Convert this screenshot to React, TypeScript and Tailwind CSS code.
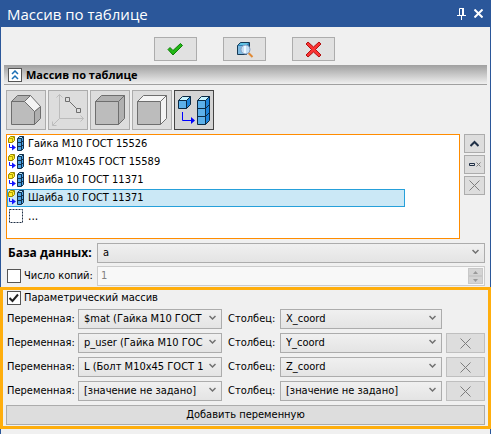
import React, { useState } from "react";

const lines = ["$mat (Гайка M10 ГОСТ", "p_user (Гайка M10 ГОС", "L (Болт M10x45 ГОСТ 1", "[значение не задано]"];
const columns = ["X_coord", "Y_coord", "Z_coord", "[значение не задано]"];

const operations = [
  "Гайка M10 ГОСТ 15526",
  "Болт M10x45 ГОСТ 15589",
  "Шайба 10 ГОСТ 11371",
  "Шайба 10 ГОСТ 11371",
];

function CheckIcon() {
  return (
    <svg width="17" height="13" viewBox="0 0 17 13">
      <path d="M1 6.5 L3 4.5 L6 7.5 L13.5 0.5 L15.5 2.5 L6 12 Z" fill="#22b814" stroke="#0d7d08" />
    </svg>
  );
}

function PreviewIcon() {
  return (
    <svg width="18" height="17" viewBox="0 0 18 17">
      <path d="M1.5 4.5 L4.5 1.5 H13.5 V10.5 L10.5 13.5 H1.5 Z" fill="#2f7fb5" stroke="#173a55" />
      <path d="M2 5 H10 V13 H2 Z" fill="#7db9e0" />
      <path d="M2.5 4 L5 2 H12.5 L10.5 4 Z" fill="#5fc4e6" />
      <path d="M12.5 12 L16.5 16" stroke="#e08a35" strokeWidth="2" />
      <circle cx="9.5" cy="8.5" r="4.5" fill="#c3dff5" stroke="#8c9fc0" />
      <path d="M9 5 V12" stroke="#eef8ff" strokeWidth="2" />
    </svg>
  );
}

function CancelIcon() {
  return (
    <svg width="17" height="17" viewBox="0 0 17 17">
      <path
        d="M1 3 L3 1 L8.5 6 L14 1 L16 3 L10.5 8.5 L16 14 L14 16 L8.5 11 L3 16 L1 14 L6.5 8.5 Z"
        fill="#fb3434"
        stroke="#b01010"
      />
    </svg>
  );
}

function ChamferIcon() {
  return (
    <svg width="38" height="38" viewBox="1 1 38 38" stroke="#6e6e6e" strokeLinejoin="round">
      <path d="M5.5 11.5 H18.5 L28.5 21.5 V34.5 H5.5 Z" fill="#bcbcbc" />
      <path d="M5.5 11.5 L11.5 5.5 H24.5 L18.5 11.5 Z" fill="#b0b0b0" />
      <path d="M28.5 21.5 L34.5 16.5 V28.5 L28.5 34.5 Z" fill="#b0b0b0" />
      <path d="M24.5 5.5 L34.5 16.5 L28.5 21.5 L18.5 11.5 Z" fill="#f4f4f4" />
    </svg>
  );
}

function AxesIcon() {
  return (
    <svg width="38" height="38" viewBox="1 1 38 38" fill="none" stroke="#bcbcbc">
      <path d="M11.5 4.5 V28.5 H35.5 M11.5 28.5 L4.5 35.5 M8.5 7.5 L11.5 4.5 L14.5 7.5 M32.5 25.5 L35.5 28.5 L32.5 31.5 M4.5 31.5 V35.5 H8.5" />
      <path d="M21.5 11.5 L28.5 18.5 M17.5 7.5 H21.5 V11.5 H17.5 Z M28.5 18.5 H32.5 V22.5 H28.5 Z" stroke="#6e6e6e" />
    </svg>
  );
}

function CubeIcon({ side, top }: { side: string; top: string }) {
  return (
    <svg width="38" height="38" viewBox="1 1 38 38" stroke="#6e6e6e" strokeLinejoin="round">
      <path d="M5.5 11.5 H28.5 V34.5 H5.5 Z" fill="#bcbcbc" />
      <path d="M5.5 11.5 L11.5 5.5 H34.5 L28.5 11.5 Z" fill={top} />
      <path d="M28.5 11.5 L34.5 5.5 V28.5 L28.5 34.5 Z" fill={side} />
    </svg>
  );
}

function ArrayIcon() {
  return (
    <svg width="38" height="38" viewBox="1 1 38 38" stroke="#0b2a45" strokeLinejoin="round">
      <path d="M4.5 10.5 H12.5 V18.5 H4.5 Z" fill="#5cb0ea" />
      <path d="M4.5 10.5 L8.5 6.5 H16.5 L12.5 10.5 Z" fill="#c5f3ff" />
      <path d="M12.5 10.5 L16.5 6.5 V14.5 L12.5 18.5 Z" fill="#1c84dc" />
      <path d="M23.5 10.5 H31.5 V34.5 H23.5 Z M23.5 18.5 H31.5 M23.5 26.5 H31.5" fill="#5cb0ea" />
      <path d="M23.5 10.5 L27.5 6.5 H35.5 L31.5 10.5 Z" fill="#c5f3ff" />
      <path d="M31.5 10.5 L35.5 6.5 V30.5 L31.5 34.5 Z M31.5 18.5 L35.5 14.5 M31.5 26.5 L35.5 22.5" fill="#1c84dc" />
      <path d="M8.5 22 V30.5 H18" fill="none" stroke="#0000ff" />
      <path d="M17 27 L21 30.5 L17 34 Z" fill="#0000ff" stroke="none" />
    </svg>
  );
}

function SmallArrayIcon() {
  return (
    <svg className="shrink-0" width="17" height="16" viewBox="0 0 17 16" strokeLinejoin="round">
      <path d="M0.5 2.5 L2.5 0.5 H6.5 V4.5 L4.5 6.5 H0.5 Z" fill="#ffee2e" stroke="#9a8900" />
      <path d="M1 2.5 H4.5 V6 M4.5 2.5 L6 1" fill="none" stroke="#b5a300" />
      <path d="M1.5 8 V11.5 H5" fill="none" stroke="#1414ff" />
      <path d="M4 8.5 L8 11.5 L4 14.5 Z" fill="#1414ff" />
      <path d="M9.5 2.5 L11.5 0.5 H15.5 V12.5 L13.5 14.5 H9.5 Z" fill="#4ba3e6" stroke="#12314d" />
      <path d="M10 2.5 H13.5 V14 M13.5 2.5 L15.5 0.5 M10 6.5 H13.5 L15.5 4.5 M10 10.5 H13.5 L15.5 8.5" fill="none" stroke="#12314d" />
      <path d="M11.5 1.5 H14" stroke="#b8e8ff" />
    </svg>
  );
}

function CrossIcon() {
  return (
    <svg width="11" height="11" viewBox="0 0 11 11" stroke="#7d7d7d">
      <path d="M0.5 0.5 L10.5 10.5 M10.5 0.5 L0.5 10.5" />
    </svg>
  );
}

function Combo({ label, options, value }: { label: string; options: string[]; value: string }) {
  return (
    <div className="relative min-w-0">
      <select
        aria-label={label}
        defaultValue={value}
        className="block h-5 w-full appearance-none border border-[#acacac] bg-linear-to-b from-[#f0f0f0] to-[#e4e4e4] pl-[5px] pr-4 text-black"
      >
        {options.map((o) => (
          <option key={o}>{o}</option>
        ))}
      </select>
      <svg className="pointer-events-none absolute right-1.5 top-1.5" width="7" height="6" viewBox="0 0 7 6">
        <path d="M0.5 1 L3.5 4 L6.5 1" fill="none" stroke="#707070" strokeWidth="1.5" />
      </svg>
    </div>
  );
}

const sideButton = "flex h-[19px] w-[21px] items-center justify-center border border-[#acacac] bg-[#dddddd]";
const dialogButton = "flex h-6 w-[43px] items-center justify-center border border-[#acacac] bg-[#e1e1e1]";
const toolButton = "flex size-10 items-center justify-center border border-[#acacac] bg-[#dddddd]";

export default function App() {
  const [parametric, setParametric] = useState(true);
  const [copies, setCopies] = useState(false);
  const [selected, setSelected] = useState(3);

  return (
    <div className="bg-[#f0f0f0] font-['DejaVu_Sans_Condensed','DejaVu_Sans',sans-serif] text-[11px] leading-4 text-black">
      {/* Title bar */}
      <header className="flex h-[27px] items-center bg-[#2b579a] pl-[7px] pr-2 text-white">
        <h1 className="flex-1 font-['Open_Sans',sans-serif] text-[15px]">Массив по таблице</h1>
        <button type="button" aria-label="Закрепить" className="mr-2">
          <svg width="9" height="12" viewBox="0 0 9 12" fill="none" stroke="#fff">
            <path d="M2.5 7 V0.5 H6 V7 M0 7.5 H9 M4.5 8 V12" />
            <path d="M6 0 V7" strokeWidth="2" />
          </svg>
        </button>
        <button type="button" aria-label="Закрыть">
          <svg width="9" height="9" viewBox="0 0 9 9" stroke="#fff" strokeWidth="2">
            <path d="M0.5 0.5 L8.5 8.5 M8.5 0.5 L0.5 8.5" />
          </svg>
        </button>
      </header>

      <div className="border-x border-[#2b579a] pb-px">
        <div className="flex justify-center gap-[26px] pb-1 pr-0.5 pt-2.5">
          <button type="button" aria-label="Применить" className={dialogButton}><CheckIcon /></button>
          <button type="button" aria-label="Просмотр" className={dialogButton}><PreviewIcon /></button>
          <button type="button" aria-label="Отмена" className={dialogButton}><CancelIcon /></button>
        </div>

        <div className="mx-[3px] flex h-5 items-center gap-1 border-b border-[#a0a0a0] bg-linear-to-b from-[#a0a0a0] to-[#f0f0f0] pl-1">
          <button type="button" aria-label="Свернуть" className="flex size-3.5 items-center justify-center border border-[#555] bg-white">
            <svg width="8" height="10" viewBox="0 0 8 10" fill="none" stroke="#1b6fb5" strokeWidth="1.5">
              <path d="M1 4 L4 1 L7 4 M1 9 L4 6 L7 9" />
            </svg>
          </button>
          <h2 className="font-['Open_Sans',sans-serif] text-[11px] font-bold">Массив по таблице</h2>
        </div>

        <div className="flex gap-0.5 px-[5px] pt-[5px]">
          <button type="button" aria-label="Фаска" className={toolButton}><ChamferIcon /></button>
          <button type="button" aria-label="Точки" className={toolButton}><AxesIcon /></button>
          <button type="button" aria-label="Тело" className={toolButton}><CubeIcon side="#b0b0b0" top="#b0b0b0" /></button>
          <button type="button" aria-label="Грани" className={toolButton}><CubeIcon side="#f4f4f4" top="#f4f4f4" /></button>
          <button type="button" aria-label="Массив" className="flex size-10 items-center justify-center border border-[#444] bg-[#d4d4d4]"><ArrayIcon /></button>
        </div>

        <div className="flex gap-1 px-[5px] pt-1">
          <ul className="h-[105px] flex-1 border border-[#ff8c00] bg-white">
            {operations.map((name, i) => (
              <li key={i} className="mr-[54px]">
                <button
                  type="button"
                  onClick={() => setSelected(i)}
                  className={`flex h-[18px] w-full items-center gap-[3px] border ${
                    selected === i ? "border-[#26a0da] bg-[#cbe8f6]" : "border-transparent"
                  }`}
                >
                  <SmallArrayIcon />
                  {name}
                </button>
              </li>
            ))}
            <li className="flex h-[18px] items-center gap-[5px] pl-0.5">
              <svg width="14" height="14" viewBox="0 0 14 14">
                <rect x="0.5" y="0.5" width="13" height="13" fill="none" stroke="#1f2f45" strokeDasharray="2 1" />
              </svg>
              <span className="text-xs">...</span>
            </li>
          </ul>
          <div className="flex flex-col gap-0.5">
            <button type="button" aria-label="Вверх" className={sideButton}>
              <svg width="9" height="7" viewBox="0 0 9 7" fill="none" stroke="#1f2f45" strokeWidth="2">
                <path d="M0.5 6 L4.5 2 L8.5 6" />
              </svg>
            </button>
            <button type="button" aria-label="Исключить" className={sideButton}>
              <svg width="12" height="5" viewBox="0 0 12 5" fill="none">
                <path d="M0.5 1.5 H5.5 V3.5 H0.5 Z" stroke="#1f2f45" />
                <path d="M7.5 0.5 L11.5 4.5 M11.5 0.5 L7.5 4.5" stroke="#7d7d7d" />
              </svg>
            </button>
            <button type="button" aria-label="Удалить" className={sideButton}><CrossIcon /></button>
          </div>
        </div>

        <div className="grid grid-cols-[88px_1fr] items-center gap-x-[3px] gap-y-[3px] px-[5px] pt-1">
          <span className="pl-0.5 font-['Open_Sans',sans-serif] text-xs font-bold">База данных:</span>
          <Combo label="База данных" options={["a"]} value="a" />
          <label className="flex items-center gap-[3px] whitespace-nowrap pl-px">
            <input
              type="checkbox"
              checked={copies}
              onChange={(e) => setCopies(e.target.checked)}
              className="size-3.5 appearance-none border border-[#555] bg-white"
            />
            Число копий:
          </label>
          <div className="flex h-5 border border-[#cccccc] bg-[#f8f8f8] p-px">
            <input aria-label="Число копий" disabled={!copies} defaultValue="1" className="min-w-0 flex-1 pl-0.5 text-[#838383]" />
            <div className="flex w-[15px] flex-col">
              {["M1 3 L3.5 0 L6 3 Z", "M1 0 L3.5 3 L6 0 Z"].map((d, i) => (
                <button key={d} type="button" disabled aria-label={i ? "Меньше" : "Больше"} className="flex flex-1 items-center justify-center border border-[#c8c8c8] bg-[#d4d4d4]">
                  <svg width="7" height="3" viewBox="0 0 7 3"><path d={d} fill="#999" /></svg>
                </button>
              ))}
            </div>
          </div>
        </div>
      </div>

      {/* Parametric array */}
      <section className="border-[3px] border-[#ffae0d] px-[3px] pb-px">
        <label className="flex items-center gap-[3px] pl-px">
          <span className="relative flex">
            <input
              type="checkbox"
              checked={parametric}
              onChange={(e) => setParametric(e.target.checked)}
              className="size-3.5 appearance-none border border-[#555] bg-white"
            />
            {parametric && (
              <svg className="pointer-events-none absolute left-0.5 top-0.5" width="10" height="10" viewBox="0 0 10 10" fill="none">
                <path d="M0.5 5 L3.5 8 L9 1.5" stroke="#222" strokeWidth="2" />
              </svg>
            )}
          </span>
          Параметрический массив
        </label>
        <div className="flex flex-col gap-1 pt-[3px]">
          {lines.map((line, i) => (
            <div key={line} className="grid grid-cols-[68px_144fr_50px_162fr_39px] items-center gap-x-1">
              <span className="whitespace-nowrap pl-px">Переменная:</span>
              <Combo label="Переменная" options={lines} value={line} />
              <span className="whitespace-nowrap pl-0.5">Столбец:</span>
              <Combo label="Столбец" options={columns} value={columns[i]} />
              {i > 0 && (
                <button type="button" aria-label="Удалить" className="flex h-5 items-center justify-center border border-[#bfbfbf] bg-[#dddddd]">
                  <CrossIcon />
                </button>
              )}
            </div>
          ))}
          <button type="button" className="h-5 w-full border border-[#acacac] bg-[#dddddd]">
            Добавить переменную
          </button>
        </div>
      </section>
      <div className="h-1.5 border-x border-b border-[#2b579a]" />
    </div>
  );
}
